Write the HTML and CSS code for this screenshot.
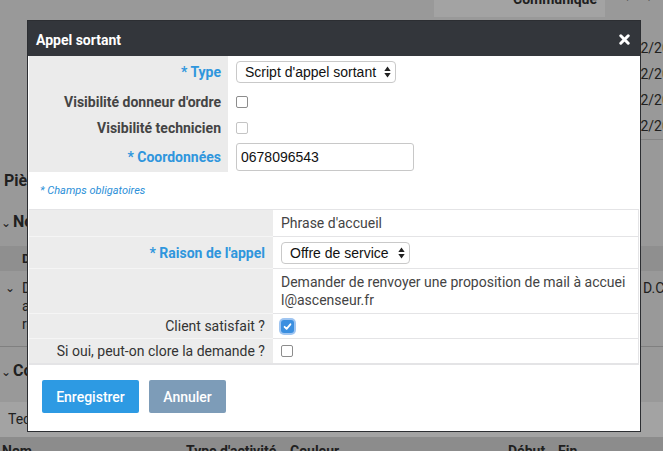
FILE: index.html
```html
<!DOCTYPE html>
<html lang="fr">
<head>
    <meta charset="UTF-8">
    <title>Appel sortant</title>
    <link rel="stylesheet" href="styles.css">
</head>
<body>
<div class="page">
    <div class="info">
        <div class="info-row info-row-hl"><span class="info-label">Communiqué</span><span class="info-value">01/12/2017</span></div>
        <div class="info-row info-row-short"><span class="info-label">Classé sans suite SDA</span><span class="info-value"></span></div>
        <div class="info-row"><span class="info-label">Date de création</span><span class="info-value">01/12/2017</span></div>
        <div class="info-row"><span class="info-label">Date d'échéance</span><span class="info-value">02/12/2017</span></div>
        <div class="info-row"><span class="info-label">Date de relance</span><span class="info-value">02/12/2017</span></div>
        <div class="info-row"><span class="info-label">Date de clôture</span><span class="info-value">02/12/2017</span></div>
    </div>

    <h2 class="section-title section-first">Pièces jointes</h2>
    <h2 class="section-title"><span class="chev">&#8964;</span>Notes</h2>
    <div class="bg-table">
        <div class="bg-head-row"><span class="bg-cell-chev"></span><span class="bg-cell-text">Date</span></div>
        <div class="bg-row">
            <span class="bg-cell-chev">&#8964;</span>
            <span class="bg-cell-text">Demande<br>a traiter<br>rappel</span>
            <span class="bg-cell-author">D.Collin</span>
        </div>
    </div>
    <h2 class="section-title section-cr"><span class="chev">&#8964;</span>Comptes-rendus</h2>
    <div class="bg-tabs">Techniciens</div>
    <div class="bg-cols">
        <span class="col-nom">Nom</span>
        <span class="col-type">Type d'activité</span>
        <span class="col-couleur">Couleur</span>
        <span class="col-debut">Début</span>
        <span class="col-fin">Fin</span>
    </div>

    <div class="overlay"></div>

    <div class="modal">
        <div class="modal-header">
            <span class="modal-title">Appel sortant</span>
            <svg class="modal-close" width="11" height="11" viewBox="0 0 11 11">
                <path d="M1.8 1.8 L9.2 9.2 M9.2 1.8 L1.8 9.2" stroke="#fff" stroke-width="3" stroke-linecap="round"/>
            </svg>
        </div>

        <div class="modal-body">
            <div class="form-grid">
                <div class="form-label required">* Type</div>
                <div class="form-value">
                    <div class="select select-type">
                        <span>Script d'appel sortant</span>
                        <svg width="7" height="12" viewBox="0 0 7 12"><path d="M0.3 5 L3.5 0.5 L6.7 5Z M0.3 7 L3.5 11.5 L6.7 7Z" fill="#222"/></svg>
                    </div>
                </div>
                <div class="form-label">Visibilité donneur d'ordre</div>
                <div class="form-value"><span class="checkbox"></span></div>
                <div class="form-label">Visibilité technicien</div>
                <div class="form-value"><span class="checkbox checkbox-disabled"></span></div>
                <div class="form-label required">* Coordonnées</div>
                <div class="form-value"><div class="text-input">0678096543</div></div>
            </div>

            <p class="mandatory">* Champs obligatoires</p>

            <div class="script-grid">
                <div class="script-label"></div>
                <div class="script-value">Phrase d'accueil</div>
                <div class="script-label required">* Raison de l'appel</div>
                <div class="script-value">
                    <div class="select select-reason">
                        <span>Offre de service</span>
                        <svg width="7" height="12" viewBox="0 0 7 12"><path d="M0.3 5 L3.5 0.5 L6.7 5Z M0.3 7 L3.5 11.5 L6.7 7Z" fill="#222"/></svg>
                    </div>
                </div>
                <div class="script-label"></div>
                <div class="script-value script-text">Demander de renvoyer une proposition de mail à accuei<wbr>l@ascenseur.fr</div>
                <div class="script-label">Client satisfait ?</div>
                <div class="script-value">
                    <span class="checkbox checkbox-checked">
                        <svg width="13" height="13" viewBox="0 0 13 13"><path d="M3.6 6.8 L5.6 8.8 L9.4 4.3" fill="none" stroke="#fff" stroke-width="1.8" stroke-linecap="round" stroke-linejoin="round"/></svg>
                    </span>
                </div>
                <div class="script-label last">Si oui, peut-on clore la demande ?</div>
                <div class="script-value last"><span class="checkbox checkbox-small"></span></div>
            </div>
        </div>

        <div class="modal-footer">
            <button class="btn btn-primary">Enregistrer</button>
            <button class="btn btn-cancel">Annuler</button>
        </div>
    </div>
</div>
</body>
</html>
```

FILE: styles.css
```css
body {
    margin: 0;
    font-family: Roboto, "Liberation Sans", sans-serif;
    background: #f0f0f0;
}
.page {
    position: relative;
    width: 663px;
    height: 451px;
    overflow: hidden;
    color: #333;
}

/* page behind the dialog */
.info {
    margin-left: 434px;
    width: 320px;
    margin-top: -13px;
    border-bottom: 1px solid #d0d0d0;
}
.info-row {
    display: grid;
    grid-template-columns: 171px 1fr;
    height: 26px;
    align-items: center;
    font-size: 14px;
}
.info-row-hl {
    height: 30px;
    align-items: start;
}
.info-row-hl .info-label {
    background: #fff;
    height: 30px;
    padding-top: 4px;
    box-sizing: border-box;
}
.info-row-short {
    height: 18px;
}
.info-label {
    text-align: right;
    padding-right: 8px;
    font-weight: 700;
}
.info-value {
    padding-left: 6px;
    white-space: nowrap;
}
.section-title {
    margin: 21px 0 0;
    padding-left: 4px;
    font-size: 16px;
    line-height: 20px;
    font-weight: 700;
}
.section-first {
    margin-top: 31px;
}
.section-cr {
    margin-top: 14px;
}
.chev {
    font-weight: 400;
    font-size: 12px;
    margin-right: 2px;
    margin-left: -3px;
}
.bg-table {
    margin-top: 13px;
    border-bottom: 1px solid #c8c8c8;
}
.bg-head-row {
    display: flex;
    height: 25px;
    align-items: center;
    background: #e0e0e0;
    font-size: 13px;
    font-weight: 700;
}
.bg-row {
    display: flex;
    height: 75px;
    font-size: 14px;
    line-height: 18px;
    padding-top: 8px;
    box-sizing: border-box;
}
.bg-cell-chev {
    width: 22px;
    flex: none;
    padding-left: 5px;
    box-sizing: border-box;
    font-size: 12px;
}
.bg-cell-text {
    width: 621px;
    flex: none;
}
.bg-cell-author {
    white-space: nowrap;
}
.bg-tabs {
    margin-top: 20px;
    height: 35px;
    background: #fff;
    font-size: 14px;
    line-height: 35px;
    padding-left: 8px;
}
.bg-cols {
    display: flex;
    height: 30px;
    padding-top: 6px;
    box-sizing: border-box;
    background: #dcdcdc;
    font-size: 14px;
    font-weight: 700;
    white-space: nowrap;
}
.col-nom { width: 186px; padding-left: 2px; box-sizing: border-box; }
.col-type { width: 104px; }
.col-couleur { width: 218px; }
.col-debut { width: 50px; }
.overlay {
    position: absolute;
    inset: 0;
    background: rgba(0, 0, 0, 0.36);
}

/* dialog */
.modal {
    position: absolute;
    left: 27px;
    top: 20px;
    width: 614px;
    background: #fff;
    border: 1px solid #2c2e32;
    box-sizing: border-box;
}
.modal-header {
    display: flex;
    justify-content: space-between;
    align-items: center;
    height: 35px;
    padding: 0 10px 0 8px;
    background: #33363b;
}
.modal-title {
    color: #fff;
    font-size: 14px;
    font-weight: 700;
    margin-top: 3px;
}
.modal-close {
    display: block;
    margin-top: 2px;
}
.modal-body {
    padding: 0 1px;
}
.form-grid {
    display: grid;
    grid-template-columns: 199px 1fr;
    grid-template-rows: 32px 27px 26px 31px;
}
.form-label {
    background: #ebebeb;
    display: flex;
    align-items: center;
    justify-content: flex-end;
    padding-right: 7px;
    font-size: 14px;
    font-weight: 700;
    color: #444;
}
.form-label.required,
.script-label.required {
    color: #2f96dd;
    font-weight: 700;
}
.form-value {
    display: flex;
    align-items: center;
    padding-left: 8px;
}
.select {
    display: flex;
    align-items: center;
    justify-content: space-between;
    height: 22px;
    border: 1px solid #c9c9c9;
    border-radius: 4px;
    box-sizing: border-box;
    padding: 0 4px 0 8px;
    font-family: "Liberation Sans", Arial, sans-serif;
    font-size: 14px;
    color: #111;
    background: #fff;
}
.select-type {
    width: 160px;
}
.select-reason {
    width: 129px;
    margin-top: 1px;
}
.text-input {
    width: 178px;
    height: 28px;
    border: 1px solid #c8c8c8;
    border-radius: 3px;
    box-sizing: border-box;
    padding-left: 4px;
    line-height: 26px;
    font-family: "Liberation Sans", Arial, sans-serif;
    font-size: 14px;
    color: #111;
}
.checkbox {
    display: inline-block;
    width: 12px;
    height: 12px;
    border: 1px solid #8d8d8d;
    border-radius: 2px;
    box-sizing: border-box;
    background: #fff;
}
.checkbox-disabled {
    border-color: #c4c4c4;
}
.checkbox-small {
    width: 12px;
    height: 12px;
}
.checkbox-checked {
    width: 13px;
    height: 13px;
    border: none;
    border-radius: 3px;
    background: #3b8fe0;
    box-shadow: 0 0 0 2px rgba(80, 150, 230, 0.55);
}
.checkbox-checked svg {
    display: block;
}
.mandatory {
    margin: 0;
    height: 37px;
    line-height: 37px;
    padding-left: 11px;
    font-size: 11px;
    font-style: italic;
    color: #2b8fd8;
}
.script-grid {
    display: grid;
    grid-template-columns: 244px 1fr;
    grid-template-rows: 27px 32px 45px 25px 24px;
    border-top: 1px solid #e4e4e6;
    border-right: 1px solid #e4e4e6;
    border-bottom: 2px solid #e4e4e6;
}
.script-label {
    background: #ececec;
    border-bottom: 1px solid #f5f5f5;
    display: flex;
    align-items: center;
    justify-content: flex-end;
    padding-right: 8px;
    font-size: 14px;
    color: #333;
}
.script-value {
    border-bottom: 1px solid #e4e4e6;
    display: flex;
    align-items: center;
    padding: 0 8px;
    font-size: 14px;
    color: #444;
}
.script-label.last,
.script-value.last {
    border-bottom: none;
}
.script-text {
    line-height: 18px;
    padding-right: 9px;
}
.modal-footer {
    display: flex;
    gap: 10px;
    padding: 15px 14px 18px;
}
.btn {
    height: 33px;
    border: none;
    border-radius: 2px;
    padding: 0 14px;
    font-family: Roboto, sans-serif;
    font-size: 14px;
    font-weight: 500;
    color: #fff;
}
.btn-primary {
    width: 97px;
    background: #2d9ae3;
}
.btn-cancel {
    width: 77px;
    background: #7d9cb8;
}
```
